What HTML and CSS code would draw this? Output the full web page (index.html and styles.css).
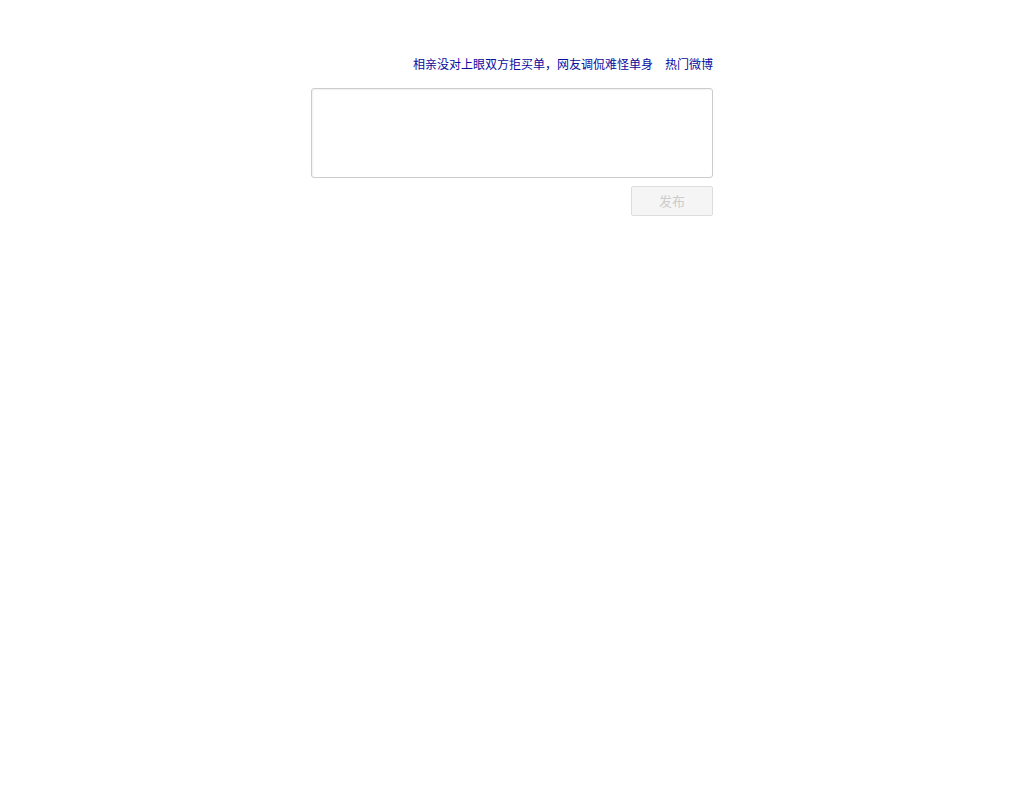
FILE: index.html
```html
<!DOCTYPE html>
<html lang="zh">
<head>
<meta charset="utf-8">
<link rel="stylesheet" href="styles.css">
</head>
<body>
<div class="wrap">
  <div class="links">
    <a class="link" href="#">相亲没对上眼双方拒买单，网友调侃难怪单身</a>
    <a class="link" href="#">热门微博</a>
  </div>
  <textarea class="box"></textarea>
  <div class="actions">
    <button class="btn" disabled>发布</button>
  </div>
</div>
</body>
</html>
```
FILE: styles.css
```css
html, body {
  margin: 0;
  padding: 0;
  background: #fff;
}
body {
  font-family: "Noto Sans CJK SC", "Liberation Sans", sans-serif;
}
.wrap {
  width: 402px;
  margin: 0 auto;
  padding-top: 56px;
  display: flex;
  flex-direction: column;
}
.links {
  display: flex;
  justify-content: flex-end;
  gap: 12px;
  height: 16px;
  line-height: 16px;
  font-size: 12px;
}
.link {
  color: #0a0a9e;
  text-decoration: none;
}
.box {
  margin-top: 16px;
  box-sizing: border-box;
  width: 402px;
  height: 90px;
  border: 1px solid #cccccc;
  border-radius: 3px;
  box-shadow: inset 1px 1px 2px rgba(0,0,0,0.06);
  resize: none;
  padding: 4px;
  display: block;
  outline: none;
}
.actions {
  display: flex;
  justify-content: flex-end;
  margin-top: 8px;
}
.btn {
  box-sizing: border-box;
  width: 82px;
  height: 30px;
  background: #f5f5f5;
  border: 1px solid #dddddd;
  border-radius: 2px;
  color: #cccccc;
  font-family: "Noto Sans CJK SC", sans-serif;
  font-size: 13px;
  padding: 0 0 2px 0;
}
```
